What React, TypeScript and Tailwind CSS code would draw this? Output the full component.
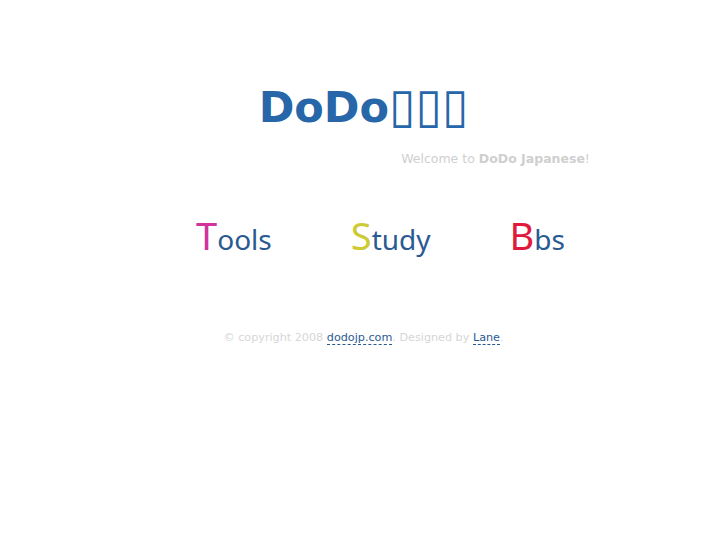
const navItems = [
  { first: 'T', rest: 'ools', color: 'text-[#d1339c]' },
  { first: 'S', rest: 'tudy', color: 'text-[#cdcb35]' },
  { first: 'B', rest: 'bs', color: 'text-[#df1a3d]' },
];

export default function App() {
  return (
    <div className="min-h-[545px] w-full bg-white font-['DejaVu_Sans',sans-serif]">
      {/* Header */}
      <div className="pt-[80px] text-center">
        <h1 className="text-[43px] font-bold leading-[54px] text-[#2766a8]">
          DoDo<span className="text-[48px] font-normal leading-none">▯▯▯</span>
        </h1>
      </div>
      <div className="mt-[16px] flex justify-center pl-[264px] text-[12.5px] leading-[18px] text-[#cfcfcf]">
        <p>
          Welcome to <b>DoDo Japanese</b>!
        </p>
      </div>

      {/* Nav */}
      <nav className="mt-[42px] flex justify-center gap-[79px] pl-[34px] font-['Noto_Sans',sans-serif] leading-[50px]">
        {navItems.map((item) => (
          <a key={item.first} href="#" className="text-[28px] text-[#2a5a92]">
            <span className={`text-[38px] ${item.color}`}>{item.first}</span>
            {item.rest}
          </a>
        ))}
      </nav>

      {/* Footer */}
      <div className="mt-[66px] text-center text-[11.2px] leading-[16px] text-[#d6d6d6]">
        © copyright 2008{' '}
        <a href="#" className="border-b border-dashed border-[#2a5a92] text-[#2a5a92]">
          dodojp.com
        </a>
        . Designed by{' '}
        <a href="#" className="border-b border-dashed border-[#2a5a92] text-[#2a5a92]">
          Lane
        </a>
        .
      </div>
    </div>
  );
}
